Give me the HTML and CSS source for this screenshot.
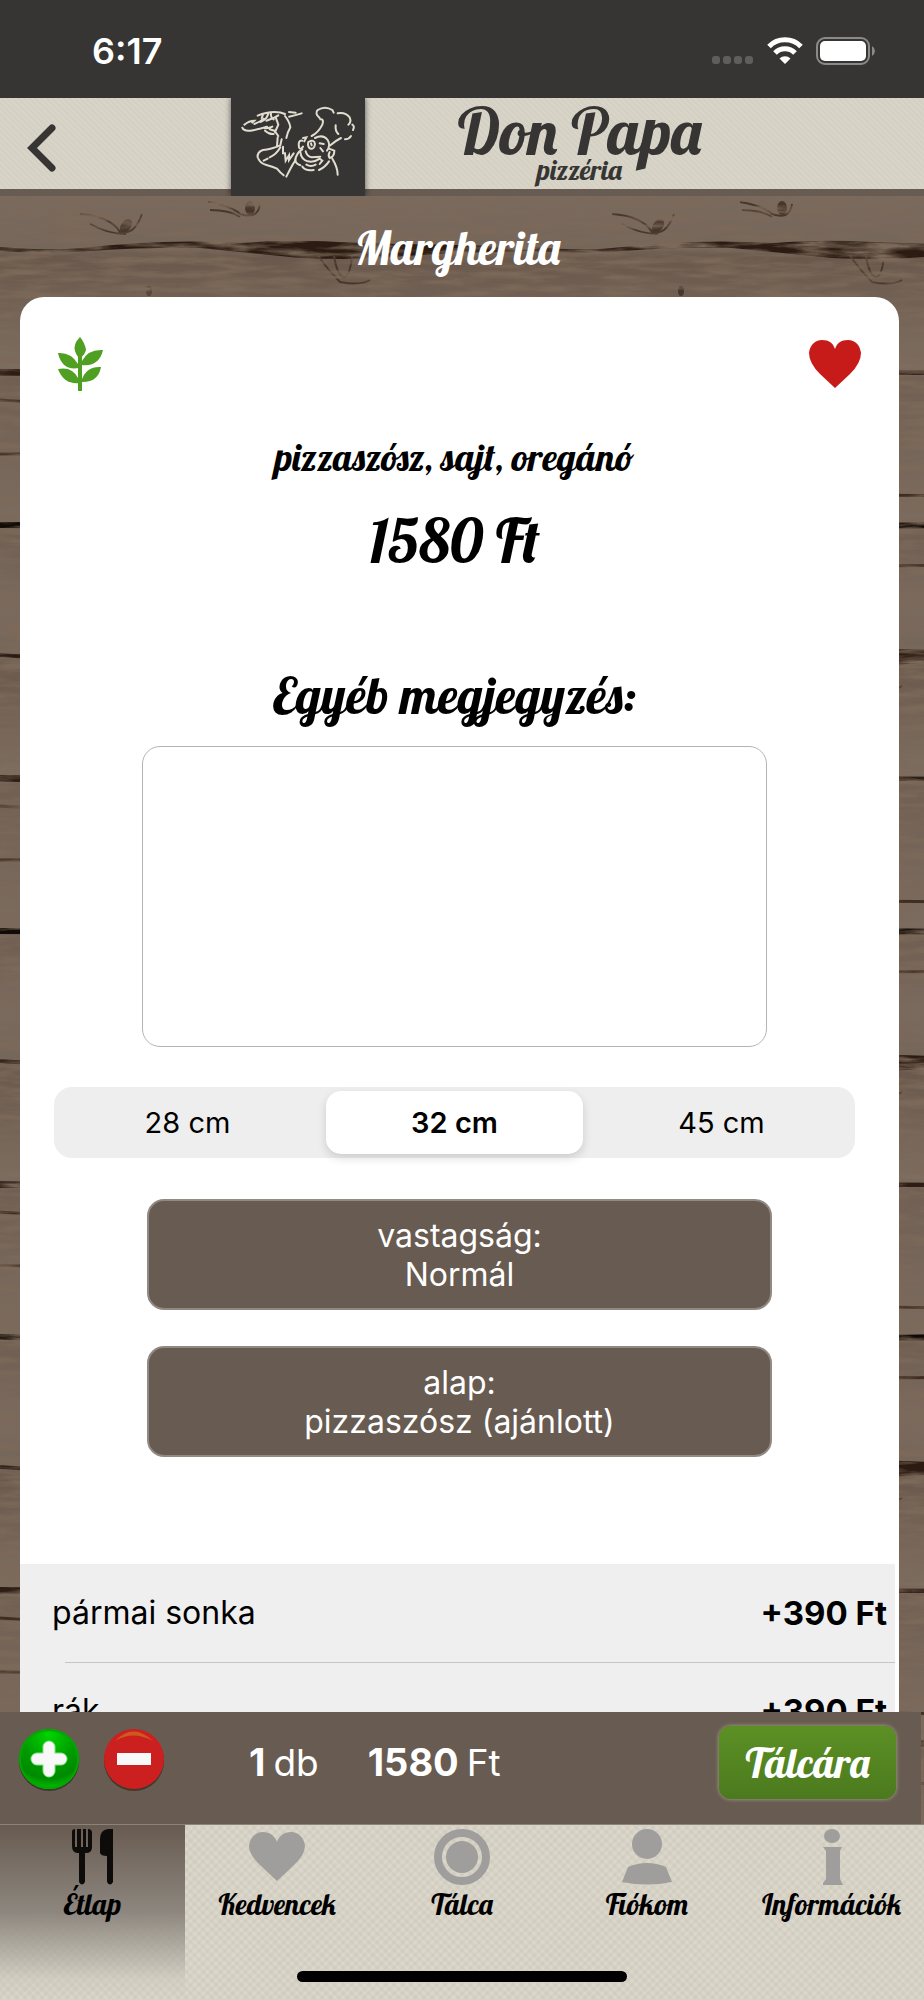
FILE: index.html
```
<!DOCTYPE html>
<html lang="hu">
<head>
	<meta charset="utf-8">
	<meta name="viewport" content="width=device-width, initial-scale=1">
	<title>Don Papa pizzéria - Margherita</title>
	<link rel="stylesheet" href="styles.css">
</head>
<body>
<div class="screen">

	<!-- Wood background -->
	<svg class="wood" width="100%" height="100%" aria-hidden="true">
		<defs>
			<filter id="grain" x="0" y="0" width="100%" height="100%">
				<feTurbulence type="fractalNoise" baseFrequency="0.02 0.14" numOctaves="5" seed="11"/>
				<feColorMatrix values="0 0 0 0 0.2  0 0 0 0 0.14  0 0 0 0 0.1  2.4 0 0 0 -0.85"/>
			</filter>
			<linearGradient id="plank" x1="0" y1="0" x2="0" y2="1">
				<stop offset="0" stop-color="#7a6a5e"/>
				<stop offset="0.13" stop-color="#75665a"/>
				<stop offset="0.15" stop-color="#69584b"/>
				<stop offset="0.42" stop-color="#7d6e60"/>
				<stop offset="0.45" stop-color="#705f52"/>
				<stop offset="0.8" stop-color="#7b6c5f"/>
				<stop offset="0.83" stop-color="#6f5e51"/>
				<stop offset="1" stop-color="#7a6a5e"/>
			</linearGradient>
			<pattern id="planks" y="196" width="532" height="406" patternUnits="userSpaceOnUse">
				<rect width="532" height="406" fill="url(#plank)"/>
				<!-- gaps between the planks -->
				<path d="M0 51 Q50 55 80 52 T140 47 Q190 44 240 47 Q290 43 340 46 L400 48 Q470 49 532 51 L532 55 Q440 57 392 61 Q330 65 290 61 Q240 56 200 52 Q150 51 90 55 Q40 58 0 55z" fill="#2b1b12"/>
				<path d="M0 173 L160 174 L532 175 V179 L300 179 L0 180z" fill="#2e1d15"/>
				<path d="M0 326 L200 327 L532 326 V332 L200 333 L0 332z" fill="#120b05"/>
				<g fill="none" stroke="#402d20" stroke-width="3">
					<path d="M300 300 Q370 298 460 301"/>
					<path d="M300 368 Q360 371 430 369"/>
					<path d="M0 204 Q40 208 90 203"/>
					<path d="M0 258 H60"/>
				</g>
				<!-- knots -->
				<g fill="none" stroke="#47362a" stroke-width="2">
					<ellipse cx="126" cy="30" rx="4" ry="7" fill="#47362a" transform="rotate(35 126 30)"/>
					<path d="M80 18 Q110 20 120 36 Q134 40 142 18 M90 28 Q108 38 126 38"/>
					<ellipse cx="250" cy="12" rx="4" ry="6" fill="#47362a"/>
					<path d="M208 6 Q232 10 240 18 Q258 24 260 8 M210 14 Q230 14 240 21"/>
					<path d="M334 60 Q337 78 343 81 Q350 82 352 60 M318 60 Q328 74 340 86 Q360 90 370 84"/>
					<ellipse cx="149" cy="95" rx="2" ry="4" fill="#47362a"/>
				</g>
			</pattern>
		</defs>
		<rect width="100%" height="100%" fill="url(#planks)"/>
		<rect width="100%" height="100%" filter="url(#grain)"/>
	</svg>

	<!-- Status bar -->
	<div class="statusbar">
		<span class="clock">6:17</span>
		<div class="status-icons">
			<svg width="42" height="28" viewBox="0 0 42 28" fill="#5f5e5c" aria-hidden="true">
				<rect x="0" y="19" width="8" height="8" rx="3"/>
				<rect x="11" y="19" width="8" height="8" rx="3"/>
				<rect x="22" y="19" width="8" height="8" rx="3"/>
				<rect x="33" y="19" width="8" height="8" rx="3"/>
			</svg>
			<svg width="36" height="28" viewBox="0 0 36 28" aria-hidden="true">
				<g fill="none" stroke="#fff" stroke-width="5">
					<path d="M2 9.500 A22.500 22.500 0 0 1 34 9.500"/>
					<path d="M8 16 A14 14 0 0 1 28 16"/>
				</g>
				<path d="M18 27 L12.500 21.500 A8 8 0 0 1 23.500 21.500z" fill="#fff"/>
			</svg>
			<svg width="60" height="28" viewBox="0 0 60 28" aria-hidden="true">
				<rect x="1" y="1" width="52" height="26" rx="8" fill="none" stroke="#8b8a88" stroke-width="2"/>
				<rect x="4" y="4" width="46" height="20" rx="5" fill="#fff"/>
				<path d="M56 9 Q59 11 59 14 Q59 17 56 19z" fill="#8b8a88"/>
			</svg>
		</div>
	</div>

	<!-- Header -->
	<header class="header">
		<button class="back" type="button" aria-label="Vissza">
			<svg width="30" height="50" viewBox="0 0 30 50" fill="none" stroke="#363533" stroke-width="7" stroke-linecap="round" aria-hidden="true">
				<path d="M25 5 L5 25 L25 45"/>
			</svg>
		</button>
		<div class="logo">
			<svg width="134" height="98" viewBox="30 24 402 294" fill="none" stroke="#e2ddd0" stroke-width="6" stroke-linecap="round" aria-hidden="true">
				<path d="M64 113 Q68 124 88 122 Q116 118 138 110"/>
				<path d="M70 104 Q84 92 100 92 L94 98 M100 102 Q118 96 128 86"/>
				<path d="M110 77 Q136 66 160 66 Q180 66 192 72 M126 74 L122 84 M142 72 L136 84 Q128 92 118 96"/>
				<path d="M150 70 Q148 82 158 88 M136 92 Q158 86 172 76 M204 66 L224 68 M204 80 Q224 76 242 70"/>
				<path d="M192 78 Q206 96 208 112 Q200 126 196 144 M164 82 L172 104 L162 126"/>
				<path d="M154 110 Q142 116 130 114 M132 122 Q146 134 158 132 M146 118 L160 122 L172 138"/>
				<path d="M170 142 L168 168 M182 148 L178 166 Q150 178 126 180 Q108 186 110 202"/>
				<path d="M178 172 Q166 194 146 202 M112 206 Q118 220 134 224 Q156 230 168 236"/>
				<path d="M128 212 L140 206 M186 170 L186 190 L192 190 L194 212 L204 196 L204 210 L218 190"/>
				<path d="M170 238 Q178 248 188 256 M196 260 Q206 240 216 222 L224 210"/>
				<!-- hat -->
				<path d="M296 84 Q280 70 290 60 Q312 46 334 60 L338 68"/>
				<path d="M298 88 Q310 86 304 104 Q292 128 272 138"/>
				<path d="M350 70 Q374 66 386 82 Q392 96 382 104 M394 104 Q402 108 396 120"/>
				<path d="M344 106 Q342 122 352 132 M372 148 Q384 148 390 138 M328 166 Q344 152 360 144"/>
				<!-- face -->
				<path d="M244 152 Q230 150 234 172 Q238 182 246 170 M246 144 L256 142 L250 154"/>
				<path d="M262 156 Q280 146 282 162 Q280 178 268 176 Q258 170 262 156 M270 160 L272 166"/>
				<path d="M282 144 Q306 132 320 150 Q330 166 318 182 M296 160 L308 162 M298 174 L306 184"/>
				<path d="M254 184 Q258 200 272 202 L298 200 M244 178 Q226 188 222 212 Q228 224 238 226"/>
				<path d="M238 186 Q240 208 260 214 Q280 218 296 206 L304 212 L296 222"/>
				<path d="M244 230 Q254 244 278 240 M294 240 Q312 232 324 214 M256 224 Q270 232 284 224"/>
				<path d="M324 176 L340 182 Q340 200 326 204 Q320 196 326 186 M334 206 Q350 232 350 254"/>
			</svg>
		</div>
		<div class="brand">
			<span class="brand-name">Don Papa</span>
			<span class="brand-sub">pizzéria</span>
		</div>
	</header>

	<!-- Product -->
	<main class="product">
		<h1 class="title">Margherita</h1>
		<div class="card">
			<div class="card-icons">
				<svg width="46" height="54" viewBox="0 0 46 54" fill="#4f9f22" role="img" aria-label="Vegetáriánus">
					<path d="M22 0 Q15 7 17 14 Q19 20 22 21 Q26 19 28 13 Q27 6 22 0z"/>
					<path d="M0 16 Q13 15 20 27 L21 31 Q4 34 0 16z"/>
					<path d="M45 13 Q30 12 24 24 L24 28 Q41 30 45 13z"/>
					<path d="M0 32 Q14 29 20 41 L22 46 Q6 48 0 32z"/>
					<path d="M43 30 Q29 29 24 42 L23 45 Q40 46 43 30z"/>
					<rect x="20" y="17" width="4" height="37"/>
				</svg>
				<button class="favourite" type="button" aria-label="Kedvenc">
					<svg width="52" height="48" viewBox="0 0 52 48" fill="#c71b19" aria-hidden="true">
						<path d="M26 48 L11 34 Q0 23 0 13 C1 4 7 0 13 0 C20 0 24 3 26 9 C28 3 32 0 39 0 C46 0 51 5 52 13 Q52 23 41 34z"/>
					</svg>
				</button>
			</div>

			<p class="ingredients">pizzaszósz, sajt, oregánó</p>
			<p class="price">1580 Ft</p>

			<label class="note-label" for="note">Egyéb megjegyzés:</label>
			<textarea class="note" id="note" name="note"></textarea>

			<div class="sizes" role="radiogroup" aria-label="Méret">
				<input type="radio" name="size" id="size28">
				<label for="size28">28 cm</label>
				<input type="radio" name="size" id="size32" checked>
				<label for="size32">32 cm</label>
				<input type="radio" name="size" id="size45">
				<label for="size45">45 cm</label>
			</div>

			<div class="options">
				<button type="button">vastagság:<br>Normál</button>
				<button type="button">alap:<br>pizzaszósz (ajánlott)</button>
			</div>

			<ul class="toppings">
				<li><span>pármai sonka</span> <b>+390 Ft</b></li>
				<li><span>rák</span> <b>+390 Ft</b></li>
			</ul>
		</div>
	</main>

	<!-- Order bar -->
	<div class="orderbar">
		<div class="stepper">
			<button type="button" aria-label="Több">
				<svg width="62" height="64" viewBox="0 0 62 64" aria-hidden="true">
					<defs>
						<radialGradient id="green" cx="0.5" cy="0.1" r="0.9">
							<stop offset="0" stop-color="#00d400"/>
							<stop offset="0.5" stop-color="#009c00"/>
							<stop offset="0.8" stop-color="#008a00"/>
							<stop offset="1" stop-color="#00c000"/>
						</radialGradient>
					</defs>
					<circle cx="31" cy="33" r="30" fill="#40382f"/>
					<circle cx="31" cy="31" r="30" fill="url(#green)"/>
					<circle cx="31" cy="31" r="29" fill="none" stroke="#00a800" stroke-width="2"/>
					<path d="M31 19 V43 M19 31 H43" stroke="#7fe07f" stroke-width="13" stroke-linecap="round"/>
					<path d="M31 19 V43 M19 31 H43" stroke="#f8f8f8" stroke-width="11" stroke-linecap="round"/>
				</svg>
			</button>
			<button type="button" aria-label="Kevesebb">
				<svg width="62" height="64" viewBox="0 0 62 64" aria-hidden="true">
					<circle cx="31" cy="33" r="30" fill="#40382f"/>
					<circle cx="31" cy="31" r="30" fill="#cc1f1f"/>
					<path d="M12 13 Q30 -6 50 13 Q30 2 12 13z" fill="#cf5a1f"/>
					<rect x="14" y="25" width="34" height="12" fill="#f8f8f8"/>
				</svg>
			</button>
		</div>
		<span class="count"><b>1</b> db</span>
		<span class="total"><b>1580</b> Ft</span>
		<button class="add" type="button">Tálcára</button>
	</div>

	<!-- Tab bar -->
	<nav class="tabbar">
		<a class="active" href="#etlap">
			<svg width="56" height="56" viewBox="0 0 56 56" fill="#0d0c0b" aria-hidden="true">
				<path d="M8 3 Q8 0 11 0 V18 H13 V0 H17 V18 H19 V0 H22 V18 H24 V0 Q28 0 28 4 V18 Q28 24 22 24 H21 V53 Q18 58 15 53 V24 H13 Q8 23 8 17z"/>
				<path d="M49 0 H44 Q36 1 36 10 V24 Q37 27 43 27 V53 Q46 58 49 53z"/>
			</svg>
			Étlap
		</a>
		<a href="#kedvencek">
			<svg width="56" height="56" viewBox="0 0 56 56" fill="#9f9e9c" aria-hidden="true">
				<path d="M28 52 L12 37 Q0 26 0 17 C1 8 7 3 14 3 C21 3 26 7 28 13 C30 7 35 3 42 3 C49 3 55 8 56 17 Q56 26 44 37z"/>
			</svg>
			Kedvencek
		</a>
		<a href="#talca">
			<svg width="56" height="56" viewBox="0 0 56 56" aria-hidden="true">
				<circle cx="28" cy="28" r="24" fill="none" stroke="#9f9e9c" stroke-width="8"/>
				<circle cx="28" cy="28" r="16" fill="#9f9e9c"/>
			</svg>
			Tálca
		</a>
		<a href="#fiokom">
			<svg width="56" height="56" viewBox="0 0 56 56" fill="#9f9e9c" aria-hidden="true">
				<circle cx="28" cy="15" r="15"/>
				<path d="M9 38 Q28 30 47 38 L53 53 Q28 58 3 53z"/>
			</svg>
			Fiókom
		</a>
		<a href="#informaciok">
			<svg width="56" height="56" viewBox="0 0 56 56" fill="#9f9e9c" aria-hidden="true">
				<ellipse cx="28" cy="7" rx="8" ry="7"/>
				<path d="M19 18 H38 L36 22 V50 L39 56 H19 V54 L22 50 V22z"/>
			</svg>
			Információk
		</a>
	</nav>
	<div class="home-indicator"></div>
</div>
</body>
</html>
```
FILE: styles.css
```
* {
	box-sizing: border-box;
}

body {
	margin: 0;
	font-family: Inter, "Liberation Sans", sans-serif;
	color: #000;
}

button {
	border: 0;
	padding: 0;
	background: none;
	font: inherit;
	cursor: pointer;
}

svg {
	display: block;
}

.screen {
	position: relative;
	display: flex;
	flex-direction: column;
	height: 100vh;
	overflow: hidden;
	background-color: #6d5c4f;
}

.wood {
	position: absolute;
	inset: 0;
}

.statusbar, .header, .product, .orderbar, .tabbar {
	position: relative;
}

/* script style texts */
.brand, .title, .ingredients, .price, .note-label, .add, .tabbar {
	font-family: Lobster, "Liberation Serif", serif;
	font-weight: normal;
}

/* Status bar */
.statusbar {
	display: flex;
	flex: none;
	justify-content: space-between;
	align-items: center;
	height: 98px;
	padding: 4px 48px 0 92px;
	background-color: #363533;
	color: #fff;
}

.clock {
	font-size: 36px;
	font-weight: 600;
}

.status-icons {
	display: flex;
	gap: 13px;
}

/* Header */
.header {
	display: grid;
	grid-template-columns: 25% 134px 1fr;
	flex: none;
	height: 98px;
	background:
		repeating-linear-gradient(45deg, rgba(120, 110, 90, 0.04) 0 2px, transparent 2px 4px),
		#d8d4c8;
	border-bottom: 7px solid #685b51;
}

.back {
	display: flex;
	align-items: center;
	padding: 2px 0 0 27px;
}

.logo {
	height: 98px;
	background-color: #363533;
	box-shadow: 0 0 6px rgba(0, 0, 0, 0.6);
	clip-path: inset(0 -8px);
}

.brand {
	display: flex;
	flex-direction: column;
	align-items: center;
	padding: 6px 130px 0 0;
	color: #363533;
}

.brand-name {
	font-size: 64px;
	line-height: 54px;
}

.brand-sub {
	font-size: 28px;
	line-height: 24px;
}

/* Product */
.product {
	flex: 1;
	min-height: 0;
	overflow: hidden;
	padding: 0 25px 0 20px;
}

.title {
	margin: 0;
	padding: 3px 4px 0 0;
	font-size: 46px;
	line-height: 98px;
	text-align: center;
	color: #fff;
}

.card {
	display: flex;
	flex-direction: column;
	align-items: center;
	padding-top: 40px;
	border-radius: 24px 24px 0 0;
	background-color: #fff;
}

.card-icons {
	display: flex;
	justify-content: space-between;
	align-items: center;
	align-self: stretch;
	padding: 0 38px;
}

.ingredients {
	margin: 42px 10px 0 0;
	font-size: 38px;
	line-height: 48px;
}

.price {
	margin: 28px 10px 0 0;
	font-size: 60px;
	line-height: 64px;
}

.note-label {
	margin: 94px 10px 0 0;
	font-size: 51px;
	line-height: 56px;
}

.note {
	width: 71%;
	height: 301px;
	margin: 23px 10px 0 0;
	padding: 16px;
	border: 1px solid #b4b4b4;
	border-radius: 18px;
	background-color: #fff;
	font: inherit;
	font-size: 32px;
	resize: none;
}

/* size picker */
.sizes {
	display: flex;
	align-self: stretch;
	height: 71px;
	margin: 40px 44px 0 34px;
	padding: 4px 0;
	border-radius: 18px;
	background-color: #eee;
}

.sizes input {
	position: absolute;
	opacity: 0;
}

.sizes label {
	flex: 1;
	margin: 0 5px;
	border-radius: 15px;
	font-size: 29px;
	line-height: 63px;
	text-align: center;
}

.sizes input:checked + label {
	background-color: #fff;
	box-shadow: 0 4px 10px rgba(0, 0, 0, 0.14);
	font-weight: 600;
}

.options {
	display: flex;
	flex-direction: column;
	gap: 36px;
	width: 71%;
	margin-top: 41px;
}

.options button {
	height: 111px;
	border: 2px solid #918a83;
	border-radius: 17px;
	background-color: #685b51;
	color: #fff;
	font-size: 32px;
	line-height: 39px;
}

/* toppings */
.toppings {
	align-self: stretch;
	margin: 107px 4px 0 0;
	padding: 0;
	list-style: none;
	background-color: #efefef;
}

.toppings li {
	display: flex;
	justify-content: space-between;
	padding: 0 8px 0 32px;
	font-size: 32px;
	line-height: 98px;
}

.toppings b {
	font-size: 33px;
}

.toppings li + li {
	background: linear-gradient(#c6c6c6, #c6c6c6) 45px 0 / 100% 1px no-repeat;
}

/* Order bar */
.orderbar {
	display: flex;
	flex: none;
	align-items: center;
	height: 112px;
	margin-right: 3px;
	padding: 0 25px 12px 18px;
	background-color: #685b51;
	color: #fff;
	font-size: 37px;
}

.stepper {
	display: flex;
	gap: 23px;
	padding-bottom: 4px;
}

.count, .total {
	display: flex;
	align-items: baseline;
	gap: 8px;
}

.orderbar b {
	font-size: 38px;
}

.count {
	margin-left: 84px;
}

.total {
	margin-left: 49px;
}

.add {
	width: 177px;
	height: 73px;
	margin-left: auto;
	border-radius: 12px;
	background: linear-gradient(#5c9024, #4b7a1e);
	box-shadow: 0 0 4px #a5b08c;
	color: #fff;
	font-size: 41px;
}

/* Tab bar */
.tabbar {
	display: grid;
	grid-template-columns: repeat(5, 1fr);
	flex: none;
	height: 176px;
	background:
		repeating-linear-gradient(45deg, rgba(120, 110, 90, 0.05) 0 3px, transparent 3px 6px),
		repeating-linear-gradient(-45deg, rgba(120, 110, 90, 0.05) 0 3px, transparent 3px 6px),
		#dbd7cb;
	border-top: 1px solid #8d8378;
}

.tabbar a {
	display: flex;
	flex-direction: column;
	align-items: center;
	padding-top: 4px;
	color: #000;
	font-size: 29px;
	line-height: 38px;
	text-decoration: none;
}

.tabbar a.active {
	background: linear-gradient(#685b51, #8d877f 50%, rgba(200, 196, 184, 0.4) 88%, rgba(219, 215, 203, 0));
}

.home-indicator {
	position: absolute;
	bottom: 18px;
	left: 50%;
	width: 330px;
	height: 11px;
	margin-left: -165px;
	border-radius: 6px;
	background-color: #000;
}
```
